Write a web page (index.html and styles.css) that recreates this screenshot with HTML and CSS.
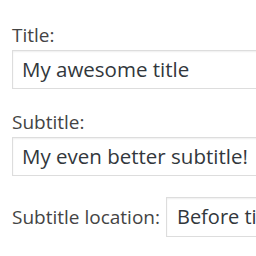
FILE: index.html
```html
<!DOCTYPE html>
<html lang="en">
<head>
  <meta charset="UTF-8" />
  <meta name="viewport" content="width=device-width, initial-scale=1.0">
  <title>Subtitle settings</title>
  <link rel="stylesheet" href="styles.css">
</head>
<body>
  <form class="settings">
    <div class="field">
      <label for="title">Title:</label>
      <input type="text" id="title" class="input" value="My awesome title">
    </div>

    <div class="field">
      <label for="subtitle">Subtitle:</label>
      <input type="text" id="subtitle" class="input" value="My even better subtitle!">
    </div>

    <!-- location row, label and select side by side -->
    <div class="field-inline">
      <label for="location">Subtitle location:</label>
      <select id="location" class="input select">
        <option>Before title</option>
        <option>After title</option>
      </select>
    </div>
  </form>
</body>
</html>
```

FILE: styles.css
```css
html, body {
  margin: 0;
  background: #fff;
  overflow: hidden;
}

body {
  font-family: "Open Sans", "DejaVu Sans", sans-serif;
  color: #444;
  width: 256px;
  height: 256px;
}

.settings {
  padding: 23px 0 0 12px;
}

.field label {
  display: block;
  font-size: 19px;
  line-height: 24px;
  margin-bottom: 3px;
}

.field {
  margin-bottom: 21px;
}

.input {
  display: block;
  box-sizing: border-box;
  width: 320px;
  height: 39px;
  margin: 0;
  padding: 0 9px 2px;
  border: 1px solid #ddd;
  border-radius: 0;
  box-shadow: inset 0 1px 2px rgba(0, 0, 0, .07);
  font-family: inherit;
  font-size: 20.5px;
  color: #32373c;
  background: #fff;
  outline: none;
}

.field-inline {
  display: flex;
  align-items: baseline;
  gap: 6px;
}

.field-inline label {
  font-size: 19px;
  white-space: nowrap;
}

.select {
  -webkit-appearance: none;
  appearance: none;
  width: 200px;
  height: 40px;
  padding: 0 10px 2px;
  font-size: 20px;
  flex-shrink: 0;
}
```
